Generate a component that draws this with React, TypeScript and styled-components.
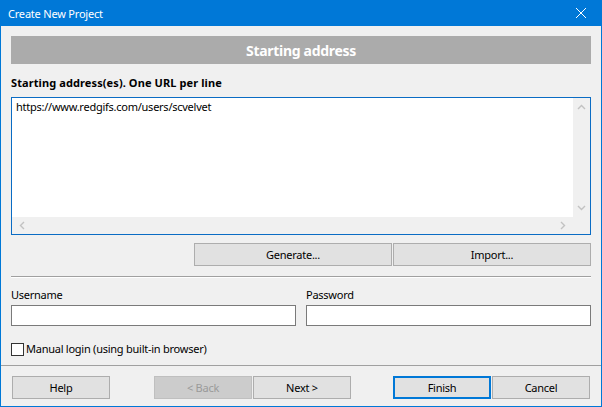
import styled, { createGlobalStyle } from 'styled-components';

const GlobalStyle = createGlobalStyle`
  html, body {
    margin: 0;
    padding: 0;
    background: #f0f0f0;
  }
  body {
    font-family: "Noto Sans", "Liberation Sans", sans-serif;
    font-size: 11px;
    letter-spacing: -0.25px;
    color: #000;
  }
  * {
    box-sizing: border-box;
  }
`;

type Chevron = 'up' | 'down' | 'left' | 'right';

const chevronPoints: Record<Chevron, string> = {
  up: '1,5 4.5,1.5 8,5',
  down: '1,2 4.5,5.5 8,2',
  left: '5,1 1.5,4.5 5,8',
  right: '2,1 5.5,4.5 2,8',
};

function Arrow({ dir }: { dir: Chevron }) {
  const vertical = dir === 'up' || dir === 'down';
  return (
    <svg width={vertical ? 9 : 7} height={vertical ? 7 : 9} viewBox={vertical ? '0 0 9 7' : '0 0 7 9'}>
      <polyline points={chevronPoints[dir]} fill="none" stroke="#c2c2c2" strokeWidth="1.4" />
    </svg>
  );
}

export default function App() {
  return (
    <>
      <GlobalStyle />
      <Window>
        <TitleBar>
          <span>Create New Project</span>
          <CloseIcon width="10" height="10" viewBox="0 0 10 10">
            <path d="M0 0 L10 10 M10 0 L0 10" stroke="#fff" strokeWidth="1" />
          </CloseIcon>
        </TitleBar>

        <Body>
          <Header>Starting address</Header>
          <SectionLabel>Starting address(es). One URL per line</SectionLabel>

          <UrlBox>
            <UrlText>https://www.redgifs.com/users/scvelvet</UrlText>
            <VScroll>
              <Arrow dir="up" />
              <Arrow dir="down" />
            </VScroll>
            <HScroll>
              <Arrow dir="left" />
              <Arrow dir="right" />
            </HScroll>
            <Corner />
          </UrlBox>

          <ButtonRow>
            <Button $width={198}>Generate...</Button>
            <Button $width={198}>Import...</Button>
          </ButtonRow>

          <Divider />

          <Credentials>
            <Field>
              <FieldLabel>Username</FieldLabel>
              <TextInput />
            </Field>
            <Field>
              <FieldLabel>Password</FieldLabel>
              <TextInput />
            </Field>
          </Credentials>

          <CheckRow>
            <CheckBox />
            <span>Manual login (using built-in browser)</span>
          </CheckRow>
        </Body>

        <Footer>
          <Button $width={98}>Help</Button>
          <ButtonGroup $offset={44}>
            <Button $width={98} disabled>
              &lt; Back
            </Button>
            <Button $width={98}>Next &gt;</Button>
          </ButtonGroup>
          <ButtonGroup $offset={42}>
            <Button $width={98} $primary>
              Finish
            </Button>
            <Button $width={98}>Cancel</Button>
          </ButtonGroup>
        </Footer>
      </Window>
    </>
  );
}

const Window = styled.div`
  display: flex;
  flex-direction: column;
  width: 602px;
  height: 407px;
  border: 1px solid #0078d7;
  background: #f0f0f0;
`;

const TitleBar = styled.div`
  display: flex;
  align-items: center;
  justify-content: space-between;
  height: 25px;
  padding: 0 15px 1px 7px;
  background: #0078d7;
  color: #fff;
  font-size: 11px;
  letter-spacing: -0.2px;
`;

const CloseIcon = styled.svg`
  display: block;
`;

const Body = styled.div`
  display: flex;
  flex-direction: column;
  flex: 1;
  padding: 10px 10px 0;
`;

const Header = styled.div`
  display: flex;
  align-items: center;
  justify-content: center;
  height: 28px;
  background: #ababab;
  color: #fff;
  font-size: 14px;
  font-weight: 700;
  letter-spacing: -0.3px;
`;

const SectionLabel = styled.div`
  margin-top: 11px;
  height: 16px;
  line-height: 16px;
  font-weight: 700;
  letter-spacing: 0.1px;
`;

const UrlBox = styled.div`
  display: grid;
  grid-template-columns: 1fr 17px;
  grid-template-rows: 1fr 17px;
  margin-top: 6px;
  height: 138px;
  border: 1px solid #0a6cc4;
  background: #fff;
`;

const UrlText = styled.div`
  padding: 1px 4px;
  line-height: 16px;
`;

const VScroll = styled.div`
  display: flex;
  flex-direction: column;
  align-items: center;
  justify-content: space-between;
  padding: 6px 0 6px;
  background: #f0f0f0;
`;

const HScroll = styled.div`
  display: flex;
  align-items: center;
  justify-content: space-between;
  padding: 0 7px 0 7px;
  background: #f0f0f0;
`;

const Corner = styled.div`
  background: #f0f0f0;
`;

const ButtonRow = styled.div`
  display: flex;
  justify-content: flex-end;
  gap: 1px;
  margin-top: 8px;
`;

const Button = styled.button<{ $width: number; $primary?: boolean }>`
  width: ${({ $width }) => $width}px;
  height: 23px;
  padding: 0;
  border: ${({ $primary }) => ($primary ? '2px solid #0078d7' : '1px solid #adadad')};
  background: #e1e1e1;
  color: #000;
  font-family: inherit;
  font-size: 11px;
  letter-spacing: -0.25px;

  &:disabled {
    background: #cccccc;
    border-color: #bfbfbf;
    color: #9a9a9a;
  }
`;

const ButtonGroup = styled.div<{ $offset: number }>`
  display: flex;
  gap: 1px;
  margin-left: ${({ $offset }) => $offset}px;
`;

const Divider = styled.div`
  margin-top: 10px;
  border-top: 1px solid #a0a0a0;
  border-bottom: 1px solid #fff;
`;

const Credentials = styled.div`
  display: grid;
  grid-template-columns: 1fr 1fr;
  column-gap: 10px;
  margin-top: 9px;
`;

const Field = styled.div`
  display: flex;
  flex-direction: column;
  gap: 2px;
`;

const FieldLabel = styled.div`
  height: 16px;
  line-height: 16px;
`;

const TextInput = styled.div`
  height: 21px;
  border: 1px solid #7a7a7a;
  background: #fff;
`;

const CheckRow = styled.div`
  display: flex;
  align-items: center;
  gap: 2px;
  margin-top: 15px;
  line-height: 16px;
`;

const CheckBox = styled.span`
  width: 13px;
  height: 13px;
  border: 1px solid #333;
  background: #fff;
`;

const Footer = styled.div`
  display: flex;
  height: 41px;
  padding: 10px 0 0 11px;
  border-top: 1px solid #a0a0a0;
`;
